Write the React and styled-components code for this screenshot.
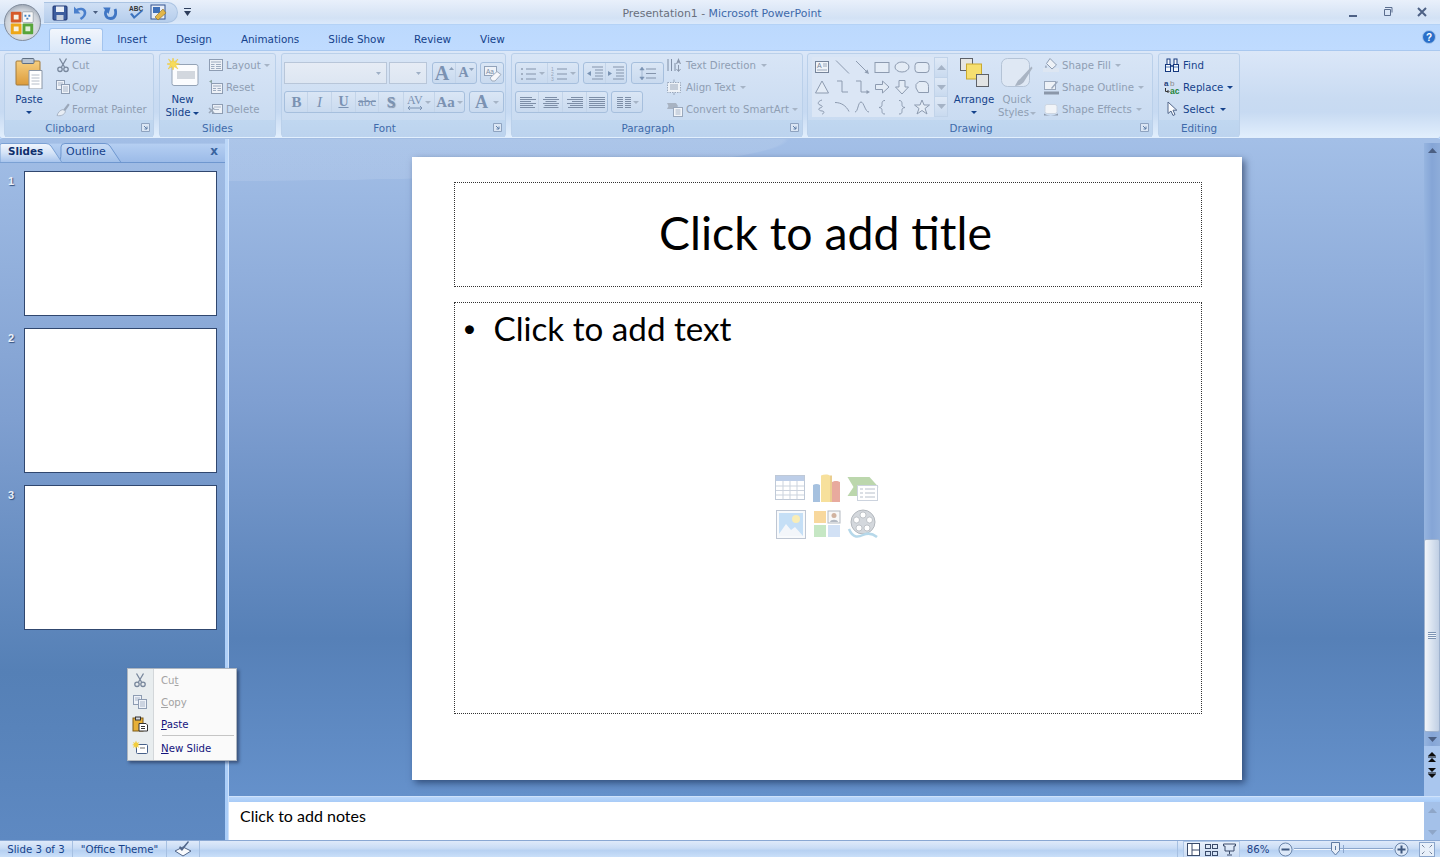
import React from "react";
import styled, { createGlobalStyle } from "styled-components";

const GlobalStyle = createGlobalStyle`
  html, body { margin: 0; padding: 0; height: 100%; overflow: hidden; }
  body { font-family: "DejaVu Sans", "Liberation Sans", sans-serif; font-size: 10px; color: #15428b; }
  * { box-sizing: border-box; }
`;

const Window = styled.div`
  position: relative;
  width: 1440px;
  height: 857px;
  display: flex;
  flex-direction: column;
  overflow: hidden;
  background: #bfdbff;
`;

/* title bar */
const TitleBar = styled.div`
  height: 25px;
  flex: none;
  display: flex;
  align-items: center;
  position: relative;
  padding-left: 44px;
  background: linear-gradient(#e9f0fb, #dde8f7 40%, #d3e2f5 75%, #dbe9fb);
  border-bottom: 1px solid #b4d2f6;
`;
const Orb = styled.svg`
  position: absolute;
  left: 4px;
  top: 4px;
  z-index: 5;
`;
const Qat = styled.div`
  height: 21px;
  width: 134px;
  margin-top: 1px;
  display: flex;
  align-items: center;
  padding-left: 8px;
  gap: 5px;
  border-radius: 0 11px 11px 0;
  border: 1px solid #aac3e2;
  border-left: none;
  background: linear-gradient(#cfdff4, #c2d6f0 50%, #b6ceec);
`;
const QatCaret = styled.svg`
  margin-left: 6px;
`;
const DocTitle = styled.div`
  position: absolute;
  left: 0;
  right: 0;
  top: 7px;
  padding-left: 4px;
  text-align: center;
  font-size: 10.9px;
  color: #3e6aaa;
  span { color: #686f7c; }
`;
const WinButtons = styled.div`
  margin-left: auto;
  display: flex;
  align-items: center;
  padding-right: 12px;
  gap: 24px;
`;

/* tabs */
const TabRow = styled.div`
  height: 25px;
  flex: none;
  display: flex;
  align-items: flex-end;
  padding-left: 49px;
  background: linear-gradient(#bcd9fd, #bfdbff);
  position: relative;
`;
const Tab = styled.div`
  height: 24px;
  padding: 7px 14.5px 0;
  font-size: 10.4px;
  color: #15428b;
  white-space: nowrap;
  ${(p) => p.$active && `
    height: 23px;
    padding: 5px 10.5px 0;
    border: 1px solid #a3c4ee;
    border-bottom: none;
    border-radius: 3px 3px 0 0;
    background: linear-gradient(#f2f6fc, #dbe8f9);
    position: relative;
    top: 1px;
  `}
`;
const HelpIcon = styled.svg`
  position: absolute;
  right: 4px;
  top: 5px;
`;

/* ribbon */
const Ribbon = styled.div`
  height: 89px;
  flex: none;
  display: flex;
  gap: 5px;
  padding: 2px 2px 2px 4px;
  border-top: 1px solid #a9c8ef;
  border-bottom: 1px solid #a3bde3;
  border-radius: 0 0 3px 3px;
  background: linear-gradient(#dbe7f8, #c9dbf2 55%, #c7daf2 70%, #e2effd);
`;
const Group = styled.div`
  width: ${(p) => p.$w}px;
  margin-left: ${(p) => p.$ml || 0}px;
  flex: none;
  height: 84px;
  display: flex;
  flex-direction: column;
  border: 1px solid #bad0ea;
  border-radius: 3px;
  background: linear-gradient(#d8e5f6, #c6d9f0);
`;
const GroupBody = styled.div`
  height: 66px;
  flex: none;
  display: flex;
`;
const GroupLabel = styled.div`
  flex: 1;
  position: relative;
  text-align: center;
  padding-right: ${(p) => (p.$launcher ? 18 : 0)}px;
  font-size: 10.4px;
  line-height: 17px;
  color: #3e6aaa;
  background: linear-gradient(#c0d7f0, #bcd3ee);
`;
const Launcher = styled.svg`
  position: absolute;
  right: 3px;
  top: 3px;
`;
const LargeBtn = styled.div`
  width: ${(p) => p.$w}px;
  margin-left: ${(p) => p.$ml || 0}px;
  flex: none;
  display: flex;
  flex-direction: column;
  align-items: center;
  padding-top: 3px;
  font-size: 10.2px;
  line-height: 13px;
  text-align: center;
  white-space: nowrap;
  color: ${(p) => (p.$off ? "#8f9eb3" : "#15428b")};
  svg { margin-bottom: 4px; flex: none; }
`;
const SmallCol = styled.div`
  display: flex;
  flex-direction: column;
  margin-left: ${(p) => p.$ml || 0}px;
`;
const SmallBtn = styled.div`
  height: 22px;
  display: flex;
  align-items: center;
  gap: ${(p) => p.$gap ?? 2}px;
  white-space: nowrap;
  font-size: 10.2px;
  color: ${(p) => (p.$off ? "#8f9eb3" : "#15428b")};
  svg { flex: none; }
`;
const Caret = styled.i`
  display: inline-block;
  width: 0;
  height: 0;
  margin-left: ${(p) => p.$ml ?? 1}px;
  margin-top: ${(p) => p.$mt || 0}px;
  margin-bottom: ${(p) => p.$mb || 0}px;
  vertical-align: middle;
  border-left: 3px solid transparent;
  border-right: 3px solid transparent;
  border-top: 3px solid ${(p) => (p.$off ? "#a6b4c6" : "#15428b")};
`;
const ToolCol = styled.div`
  display: flex;
  flex-direction: column;
  gap: 7px;
  padding: 8px 0 0 ${(p) => p.$pl || 2}px;
`;
const ToolRow = styled.div`
  display: flex;
  gap: ${(p) => p.$gap ?? 4}px;
  height: 22px;
`;
const Combo = styled.div`
  width: ${(p) => p.$w}px;
  height: 22px;
  margin-left: ${(p) => p.$ml || 0}px;
  display: flex;
  align-items: center;
  justify-content: flex-end;
  padding-right: 5px;
  border: 1px solid #b8c6d9;
  background: linear-gradient(#e6ecf5, #dde6f2);
`;
const ToolBox = styled.div`
  display: flex;
  height: 22px;
  margin-left: ${(p) => p.$ml || 0}px;
  border: 1px solid #a6bfdd;
  border-radius: 3px;
  background: linear-gradient(#dae6f5, #c9daef);
`;
const ToolCell = styled.div`
  width: ${(p) => p.$w}px;
  display: flex;
  align-items: center;
  justify-content: center;
  border-left: 1px solid ${(p) => (p.$first ? "transparent" : "#c3d4e9")};
  color: #7b92b2;
  font-family: "Liberation Serif", serif;
  font-size: ${(p) => p.$fs || 14}px;
  font-weight: ${(p) => (p.$bold ? 700 : 400)};
  font-style: ${(p) => (p.$it ? "italic" : "normal")};
  text-decoration: ${(p) => p.$deco || "none"};
  text-shadow: ${(p) => (p.$shadow ? "1px 1px 1px #7f8fa5" : "none")};
`;
const Gallery = styled.div`
  display: flex;
  margin: 3px 0 0 4px;
  height: 60px;
`;
const ShapeGrid = styled.div`
  width: 123px;
  display: grid;
  grid-template-columns: repeat(6, 20px);
  grid-auto-rows: 20px;
  border: 1px solid #c1d3e9;
  border-width: 0 1px 0 0;
  background: #dbe6f5;
  align-items: center;
  justify-items: center;
`;
const GalleryBtns = styled.div`
  width: 13px;
  display: flex;
  flex-direction: column;
`;
const GalleryBtn = styled.div`
  flex: 1;
  display: flex;
  align-items: center;
  justify-content: center;
  border: 1px solid #c1d3e9;
  border-left: none;
  margin-top: ${(p) => (p.$first ? 0 : -1)}px;
  background: linear-gradient(#dfe9f6, #c9daef);
`;

/* workspace */
const Workspace = styled.div`
  flex: 1;
  min-height: 0;
  display: flex;
  position: relative;
`;
const SidePane = styled.div`
  width: 225px;
  flex: none;
  padding-top: 4px;
  display: flex;
  flex-direction: column;
  background: linear-gradient(#a2bee6 0, #7f9fd0 40%, #5580b6 76%, #5e89c2 100%);
`;
const PaneTabs = styled.div`
  height: 20px;
  flex: none;
  display: flex;
  position: relative;
  border-top: 1px solid #a9c4ea;
  border-bottom: 1px solid #6f97cf;
  background: linear-gradient(#b5cff2, #9cbbe8);
`;
const PaneTab = styled.div`
  position: relative;
  width: ${(p) => p.$w}px;
  margin-left: ${(p) => p.$ml || 0}px;
  padding: 1px 0 0 ${(p) => p.$pl}px;
  font-size: ${(p) => (p.$active ? 10.4 : 11)}px;
  font-weight: ${(p) => (p.$active ? 700 : 400)};
  color: ${(p) => (p.$active ? "#0f2f6d" : "#15428b")};
  z-index: ${(p) => (p.$active ? 2 : 1)};
  span { position: relative; }
`;
const TabShape = styled.svg`
  position: absolute;
  left: 0;
  top: -1px;
`;
const PaneClose = styled.div`
  position: absolute;
  right: 7px;
  top: 0;
  font-size: 12px;
  font-weight: 700;
  color: #3a649f;
`;
const ThumbList = styled.div`
  display: flex;
  flex-direction: column;
  gap: 12px;
  padding: 8px 0 0 7px;
`;
const ThumbRow = styled.div`
  display: flex;
  gap: 9px;
`;
const ThumbNo = styled.div`
  width: 8px;
  padding: 4px 0 0 1px;
  font-size: 11px;
  font-weight: 700;
  color: #e9eff8;
  text-shadow: 1px 1px 1px #33507f;
  font-family: "Liberation Sans", sans-serif;
`;
const Thumb = styled.div`
  width: 193px;
  height: 145px;
  background: #fff;
  border: 1px solid #30476f;
`;
const Splitter = styled.div`
  width: 4px;
  flex: none;
  background: linear-gradient(#bcd7f8, #aacdf8);
  border-right: 1px solid #cfe2fb;
`;
const MainCol = styled.div`
  flex: 1;
  min-width: 0;
  display: flex;
  flex-direction: column;
`;
const EditRow = styled.div`
  flex: 1;
  min-height: 0;
  display: flex;
`;
const Stage = styled.div`
  flex: 1;
  display: flex;
  justify-content: center;
  padding-top: 18px;
  background:
    radial-gradient(ellipse 560px 42px at 0 0, rgba(255, 255, 255, 0.1) 99%, transparent 100%),
    linear-gradient(#a3bfe7 0, #7f9fd1 40%, #5680b7 76%, #6591cb 100%);
`;
const Slide = styled.div`
  width: 830px;
  height: 623px;
  padding: 25px 40px 0 42px;
  background: #fff;
  box-shadow: 3px 3px 7px rgba(10, 25, 60, 0.55);
  display: flex;
  flex-direction: column;
  gap: 15px;
  font-family: Lato, "Liberation Sans", sans-serif;
  color: #000;
`;
const Placeholder = styled.div`
  height: ${(p) => p.$h}px;
  border: 1px dotted #333;
  flex: none;
`;
const TitleBox = styled(Placeholder)`
  display: flex;
  align-items: center;
  justify-content: center;
  font-size: 46.4px;
  padding: 0 4px 6px 0;
`;
const BodyBox = styled(Placeholder)`
  padding: 4px 0 0 9px;
  font-size: 33.2px;
  line-height: 42px;
  display: flex;
  flex-direction: column;
`;
const Bullet = styled.div`
  display: flex;
  span:first-child { width: 30px; font-size: 24px; margin-left: -1px; padding-right: 1px; }
  span:last-child { margin-left: 1px; }
`;
const ContentIcons = styled.div`
  align-self: center;
  margin: 121px 0 0 -11px;
  display: grid;
  grid-template-columns: repeat(3, 36px);
  grid-auto-rows: 36px;
  justify-items: center;
  align-items: center;
  opacity: 0.5;
`;
const VScroll = styled.div`
  width: 16px;
  flex: none;
  display: flex;
  flex-direction: column;
  align-items: stretch;
  border-top: 4px solid #a3bfe7;
  background: linear-gradient(90deg, #96b5e0, #85a5d6 50%, #8eadda);
`;
const ScrollArrow = styled.div`
  height: 14px;
  flex: none;
  display: flex;
  align-items: center;
  justify-content: center;
`;
const Track = styled.div`
  flex: 1;
  display: flex;
  flex-direction: column;
  justify-content: flex-end;
`;
const Thumbbar = styled.div`
  height: 193px;
  display: flex;
  align-items: center;
  justify-content: center;
  border: 1px solid #9fb3cf;
  border-radius: 2px;
  background: linear-gradient(90deg, #f2f5fa, #d8e2ef 50%, #c0cfe4);
`;
const Grip = styled.div`
  width: 8px;
  height: 7px;
  background: repeating-linear-gradient(#7c93b3 0 1px, #eef3f9 1px 2px);
`;
const NavBtns = styled.div`
  height: 50px;
  flex: none;
  padding-top: 6px;
  display: flex;
  flex-direction: column;
  align-items: center;
  gap: 6px;
  background: #a9c6ee;
`;
const HSplit = styled.div`
  height: 6px;
  flex: none;
  background: linear-gradient(#b8d6fb, #a8cbf7);
  border-top: 1px solid #cfe2fb;
`;
const NotesRow = styled.div`
  height: 38px;
  flex: none;
  display: flex;
`;
const Notes = styled.div`
  flex: 1;
  padding: 3px 0 0 11px;
  background: #fff;
  color: #000;
  font-family: Lato, "Liberation Sans", sans-serif;
  font-size: 16px;
  line-height: 22px;
`;
const NotesScroll = styled.div`
  width: 16px;
  flex: none;
  display: flex;
  flex-direction: column;
  justify-content: space-between;
  align-items: center;
  padding: 6px 0 5px;
  background: #a4c1e9;
`;

/* context menu */
const Menu = styled.div`
  position: absolute;
  left: 127px;
  top: 529px;
  width: 110px;
  height: 93px;
  padding: 0 1px;
  background: linear-gradient(90deg, #e8edef 0 25px, #d3d7da 25px 26px, #fafafa 26px);
  border: 1px solid #aeb6c0;
  box-shadow: 2px 2px 3px rgba(30, 40, 70, 0.6);
  display: flex;
  flex-direction: column;
  z-index: 6;
`;
const MenuItem = styled.div`
  height: 22px;
  flex: none;
  display: flex;
  align-items: center;
  font-size: 10.2px;
  color: ${(p) => (p.$off ? "#a3a3a3" : "#14147d")};
  svg { margin: 0 13px 0 3px; flex: none; }
`;
const MenuSep = styled.div`
  height: 1px;
  flex: none;
  margin: 0 1px 1px 33px;
  background: #c5c5c5;
`;

/* status bar */
const StatusBar = styled.div`
  height: 17px;
  flex: none;
  display: flex;
  align-items: center;
  border-top: 1px solid #8aa8d3;
  background: linear-gradient(#dfeafa, #c9dcf5 45%, #b7d1f2 60%, #c9dff9);
  font-size: 10.2px;
  color: #15428b;
`;
const StatusCell = styled.div`
  height: 100%;
  width: ${(p) => p.$w}px;
  flex: none;
  display: flex;
  align-items: center;
  justify-content: center;
  border-right: 1px solid #a6c0e2;
`;
const StatusRight = styled.div`
  margin-left: auto;
  height: 100%;
  display: flex;
  align-items: center;
  border-left: 1px solid #a6c0e2;
  padding-left: 5px;
`;
const ViewBox = styled.div`
  display: flex;
  align-items: center;
  width: 57px;
  height: 100%;
  justify-content: space-around;
  border: 1px solid #b0c8e8;
  border-bottom: none;
  background: linear-gradient(#e8f0fb, #cbdcf3);
`;
const Zoom = styled.div`
  width: 36px;
  text-align: center;
  font-size: 10.2px;
  color: #1d3f86;
  margin-right: 2px;
`;
const ZoomTrack = styled.div`
  position: relative;
  width: 99px;
  height: 2px;
  margin: 0 1px;
  background: linear-gradient(#8ba6cc 50%, #f1f6fd 50%);
`;
const ZoomThumb = styled.svg`
  position: absolute;
  left: 37px;
  top: -6px;
`;
const Tick = styled.div`
  position: absolute;
  left: 49px;
  top: -3px;
  width: 1px;
  height: 8px;
  background: #8ba6cc;
`;

/* icons */
const S = ({ w = 16, h = 16, vb, children, ...rest }) => (
  <svg width={w} height={h} viewBox={vb || `0 0 ${w} ${h}`} {...rest}>{children}</svg>
);

const Scissors = () => (
  <S>
    <g fill="none" stroke="#78879c" strokeWidth="1.3">
      <path d="M4.500 1.500 9.500 10M11.500 1.500 6.500 10" />
      <circle cx="5" cy="12.300" r="2.200" />
      <circle cx="11" cy="12.300" r="2.200" />
    </g>
  </S>
);
const CopyIcon = () => (
  <S>
    <g fill="#eef2f8" stroke="#8d9cb2">
      <rect x="1.500" y="1.500" width="8" height="9" />
      <rect x="6.500" y="5.500" width="8" height="9" />
    </g>
    <path d="M3 4h5M3 6h3M8 8h5M8 10h5M8 12h5" stroke="#a8b5c8" />
  </S>
);
const PainterIcon = () => (
  <S>
    <path d="M8 9 13 2.500l1.700 1.200L10.300 10z" fill="#9aa7b9" />
    <path d="M2 14.500c1-3 3-5.500 6-6l2.500 2c-1 2.800-4 5-8.500 4z" fill="#e8edf4" stroke="#a9b5c6" />
  </S>
);
const LayoutIcon = () => (
  <S>
    <rect x="1.500" y="2.500" width="13" height="11" fill="#edf1f7" stroke="#8e9db3" />
    <path d="M3 5h10M3 7.500h3.500M3 9.500h3.500M3 11.500h3.500M8 7.500h5M8 9.500h5M8 11.500h5" stroke="#9dabbf" />
  </S>
);
const ResetIcon = () => (
  <S>
    <rect x="3.500" y="4.500" width="11" height="10" fill="#edf1f7" stroke="#8e9db3" />
    <path d="M5 7h8M5 9.500h3M5 11.500h3M9.500 9.500h3.500M9.500 11.500h3.500" stroke="#9dabbf" />
    <path d="M1 2.500 4 .8v3.400z" fill="#8aa2a0" />
  </S>
);
const DeleteIcon = () => (
  <S>
    <rect x="4.500" y="3.500" width="10" height="9" fill="#edf1f7" stroke="#8e9db3" />
    <path d="M6 6h7M6 8.500h5" stroke="#a8b5c8" />
    <path d="M1 7l5 5M6 7l-5 5" stroke="#9ba8ba" strokeWidth="1.600" />
  </S>
);
const TextDirIcon = () => (
  <S>
    <path d="M2 2v12M5.500 2v12M9 6v8" stroke="#7f8ea5" fill="none" />
    <path d="M12.500 1 10 7h1.200l.5-1.300h1.600l.5 1.300H15z" fill="#8b98ac" />
    <path d="M12.500 8v6M10.500 12l2 2.500 2-2.500" stroke="#8b98ac" fill="none" />
  </S>
);
const AlignTextIcon = () => (
  <S>
    <rect x="1.500" y="3.500" width="13" height="10" fill="#eef2f7" stroke="#9aa8bc" strokeDasharray="1.500 1" />
    <path d="M4 6h8M4 8h8M4 10h8M8 .5v2.500M8 14v2" stroke="#9aa8bc" />
  </S>
);
const SmartArtIcon = () => (
  <S w={18}>
    <path d="M1 2h9l2 3-2 3H1l1.500-3z" fill="#a8b3c2" />
    <rect x="7.500" y="6.500" width="9" height="9" fill="#f2f5f9" stroke="#9aa8bc" />
    <path d="M9.500 9h5M9.500 11h5M9.500 13h5" stroke="#a8b5c8" />
  </S>
);
const FillIcon = () => (
  <S>
    <rect x="0" y="11" width="16" height="4" fill="#dde6f2" />
    <path d="M7 1.500 13.500 8 9 12 3.500 6.500z" fill="#eef2f7" stroke="#8d9cb2" />
    <path d="M3 8c-1.500 1.500-1.500 3 0 3 1.300 0 1-1.700 0-3z" fill="#a2afc1" />
  </S>
);
const OutlineIcon = () => (
  <S>
    <rect x="1" y="12.500" width="15" height="3" fill="#8b97a9" />
    <rect x="1.500" y="2.500" width="11" height="8" fill="#eef2f7" stroke="#9aa8bc" />
    <path d="M8 9l6-7 1 1-6 7z" fill="#9aa8bc" />
  </S>
);
const EffectsIcon = () => (
  <S>
    <rect x="2" y="3.500" width="12" height="9" rx="2" fill="#f1f4f8" stroke="#cdd6e2" />
    <path d="M1 12.500c3 2.500 10 2.500 14 0v2H1z" fill="#8d99ab" />
  </S>
);
const Binoculars = () => (
  <S>
    <g fill="#f6f8fb" stroke="#15397e" strokeWidth="1">
      <rect x="1.500" y="7.500" width="5" height="7" />
      <rect x="9.500" y="7.500" width="5" height="7" />
      <rect x="3" y="2" width="3" height="5.500" />
      <rect x="10" y="2" width="3" height="5.500" />
    </g>
    <path d="M6.500 9h3" stroke="#15397e" strokeWidth="1.500" />
    <path d="M2 10h4M10 10h4" stroke="#4a78b9" />
  </S>
);
const ReplaceIcon = () => (
  <S w={18} h={16} style={{ fontFamily: "Liberation Sans, sans-serif" }}>
    <path d="M1.500 9v3.500h3M3.500 11l1.500 1.500L3.500 14" fill="none" stroke="#333" />
    <text x="0" y="7" fontSize="8" fontWeight="700" fill="#1f3f7d">a</text>
    <text x="6" y="7" fontSize="8" fill="#8c8c8c">b</text>
    <text x="6" y="15" fontSize="8.500" fontWeight="700" fill="#23853a">ac</text>
  </S>
);
const CursorIcon = () => (
  <S>
    <path d="M4 1v11.500l3-2.500 2 4.500 2-1-2-4.300h3.800z" fill="#fbfcfe" stroke="#53678a" />
  </S>
);
const FrameArrow = () => (
  <Launcher width="9" height="9">
    <path d="M.5.5h8v8h-8z" fill="#dbe6f4" stroke="#8ea3c0" />
    <path d="M3 3l3 3M6 3.500V6H3.500" stroke="#5f7fa8" fill="none" />
  </Launcher>
);

const PasteLg = () => (
  <S w={28} h={32}>
    <defs>
      <linearGradient id="pb" x1="0" x2="0" y1="0" y2="1">
        <stop offset="0" stopColor="#f6cf80" />
        <stop offset="1" stopColor="#dc9b3a" />
      </linearGradient>
    </defs>
    <rect x="1" y="4" width="24" height="24" rx="1" fill="url(#pb)" stroke="#a17a3d" />
    <rect x="7" y="1.500" width="12" height="5" rx="1" fill="#b8c3d0" stroke="#5f6f83" />
    <path d="M14 13.500h13V32H14z" fill="#fff" stroke="#8a96a6" />
    <path d="M16.500 18h8M16.500 21h8M16.500 24h8M16.500 27h8" stroke="#b6bec9" />
  </S>
);
const NewSlideLg = () => (
  <S w={32} h={32}>
    <rect x="5" y="7.500" width="26" height="21" rx="2" fill="#fbfcfe" stroke="#94a3b6" />
    <rect x="10" y="14" width="18" height="8" fill="#d2d7de" />
    <path d="M6 1 7.200 5 11 2 8.500 6 12.500 7 8.500 8.200 11 12 7.200 9.500 6 13 5 9.500 1.200 12 3.500 8 0 7 3.800 6 1.500 2 5 5z" fill="#f7dc5a" stroke="#ecc531" strokeWidth=".5" />
  </S>
);
const ArrangeLg = () => (
  <S w={30} h={32}>
    <rect x="1.500" y="1.500" width="12" height="12" fill="#e6e6e3" stroke="#5d6168" />
    <rect x="7.500" y="7" width="15" height="15" fill="#f6df6f" stroke="#c9a930" />
    <rect x="17.500" y="17.500" width="12" height="12" fill="#e2e4e4" stroke="#5d6168" />
  </S>
);
const QuickStylesLg = () => (
  <S w={34} h={32}>
    <rect x="1.500" y="1.500" width="28" height="28" rx="6" fill="#dfe8f4" stroke="#b4c3d6" />
    <path d="M31.500 9.500 20 22c-2 1-3 3-5 7 5-.5 8-2 10-6l7.500-12z" fill="#a9b4c3" />
  </S>
);

const SaveIcon = () => (
  <S>
    <rect x="1" y="1" width="14" height="14" rx="1" fill="#3c5d9e" stroke="#1e3570" />
    <rect x="4" y="1.500" width="8" height="5.500" fill="#e9eef6" />
    <rect x="4.500" y="10" width="7" height="5" fill="#c7d0de" />
  </S>
);
const UndoIcon = () => (
  <S w={15}>
    <path d="M3 5.500c3.500-2.500 8.500-2 9 2 .3 3-2 5-4.500 6.500" fill="none" stroke="#4a7fcc" strokeWidth="2.600" />
    <path d="M1 1.500v7h6.500z" fill="#4a7fcc" />
  </S>
);
const RedoIcon = () => (
  <S w={14}>
    <path d="M3.500 5c-2 3-1.200 8.500 4 8.500s6-5.500 4.500-9.500" fill="none" stroke="#4076c4" strokeWidth="2.800" />
    <path d="M0 2.500h7.500L5.500 9z" fill="#4076c4" />
  </S>
);
const SpellIcon = () => (
  <S w={17} style={{ fontFamily: "Liberation Sans, sans-serif" }}>
    <text x="1" y="6" fontSize="6.500" fontWeight="700" fill="#333">ABC</text>
    <path d="M2 9 6 14 15 6l-1.500-1L6.500 11 4 8z" fill="#3c74bf" />
  </S>
);
const PreviewIcon = () => (
  <S w={17} h={17}>
    <rect x="1" y="1" width="14" height="14" fill="#e7edf7" stroke="#33538f" />
    <rect x="3" y="3" width="7" height="6" fill="#3f70b8" />
    <path d="M5 13 13 5l3 4-8 7z" fill="#e2b64a" stroke="#876a22" strokeWidth=".6" />
  </S>
);

const TinyCaret = ({ fill = "#4a5e80" }) => (
  <svg width="5" height="3"><path d="M0 0h5L2.500 3z" fill={fill} /></svg>
);
const UpArrow = ({ fill = "#4b5f82" }) => (
  <svg width="9" height="5"><path d="M0 5h9L4.500 0z" fill={fill} /></svg>
);
const DownArrow = ({ fill = "#4b5f82" }) => (
  <svg width="9" height="5"><path d="M0 0h9L4.500 5z" fill={fill} /></svg>
);
const DoubleArrow = ({ up }) => (
  <svg width="8" height="10" style={up ? undefined : { transform: "scaleY(-1)" }}>
    <path d="M0 4h8L4 0zM0 10h8L4 6z" fill="#0c0c0c" />
    <path d="M0 5h8" stroke="#0c0c0c" />
  </svg>
);

const BulletIcon = ({ num }) => (
  <S w={17} h={15}>
    {num ? (
      <g style={{ fontFamily: "Liberation Sans, sans-serif" }} fontSize="5" fill="#95a4b9">
        <text x="0" y="5">1</text><text x="0" y="10">2</text><text x="0" y="15">3</text>
      </g>
    ) : (
      <g fill="#a2b0c3"><rect x="1" y="2" width="2" height="2" /><rect x="1" y="7" width="2" height="2" /><rect x="1" y="12" width="2" height="2" /></g>
    )}
    <path d="M6 3h10M6 8h10M6 13h10" stroke="#8494ab" />
  </S>
);
const IndentIcon = ({ inc }) => (
  <S w={16} h={14}>
    <path d="M5 1h11M8 4h8M8 7h8M8 10h8M5 13h11" stroke="#8494ab" />
    <path d={inc ? "M0 5 4 7.500 0 10z" : "M4 5 0 7.500 4 10z"} fill="#7a93b3" />
  </S>
);
const SpacingIcon = () => (
  <S w={18} h={15}>
    <path d="M3 1 .8 4h4.400zM3 14 .8 11h4.400zM3 4v7" fill="#7a93b3" stroke="#7a93b3" strokeWidth=".5" />
    <path d="M7 3h10M7 7.500h10M7 12h10" stroke="#8494ab" />
  </S>
);
const AlignIcon = ({ kind }) => {
  const rows = [1, 3, 5, 7, 9, 11];
  const short = [12, 16, 11, 16, 13, 15];
  return (
    <S w={16} h={12}>
      <g stroke="#7d8ea7">
        {rows.map((y, i) => {
          const w = kind === "j" ? 16 : short[i];
          const x = kind === "l" || kind === "j" ? 0 : kind === "c" ? (16 - w) / 2 : 16 - w;
          return <path key={y} d={`M${x} ${y + 0.5}h${w}`} />;
        })}
      </g>
    </S>
  );
};
const ColumnsIcon = () => (
  <S w={14} h={12}>
    <g stroke="#7d8ea7">
      {[1, 3, 5, 7, 9, 11].map((y) => <path key={y} d={`M0 ${y + 0.5}h6M8 ${y + 0.5}h6`} />)}
    </g>
  </S>
);
const EraserIcon = () => (
  <S w={19} h={17}>
    <rect x="1.500" y="1.500" width="12" height="9" fill="#eef2f8" stroke="#92a3ba" />
    <text x="3" y="9" fontSize="6.500" fill="#7b8ba3" style={{ fontFamily: "Liberation Sans, sans-serif" }}>Aa</text>
    <path d="M7 13 14 6.500l4 3-6 6.500H9z" fill="#f6f7fa" stroke="#a0adbe" />
  </S>
);
const KerningIcon = () => (
  <S w={16} h={17} style={{ fontFamily: "Liberation Serif, serif" }}>
    <text x="0" y="10" fontSize="12" fill="#7b92b2">AV</text>
    <path d="M1 14h14M3 12l-2 2 2 2M13 12l2 2-2 2" fill="none" stroke="#7b92b2" />
  </S>
);
const GrowIcon = ({ big }) => (
  <>
    <span style={{ fontSize: big ? 20 : 14, fontWeight: 700, lineHeight: 1 }}>A</span>
    <svg width="5" height="3" style={{ marginBottom: big ? 10 : 8 }}><path d={big ? "M0 3h5L2.500 0z" : "M0 0h5L2.500 3z"} fill="#8ea2bc" /></svg>
  </>
);

/* drawing gallery shapes */
const shapeProps = { fill: "none", stroke: "#8d9bb0", strokeWidth: 1 };
const boxProps = { fill: "#e4ecf6", stroke: "#8d9bb0", strokeWidth: 1 };
const shapes = [
  <><rect x="1.500" y="2.500" width="13" height="11" fill="#f0f4f9" stroke="#75849a" /><text x="3" y="9" fontSize="7" fill="#75849a" style={{ fontFamily: "Liberation Sans, sans-serif" }}>A</text><path d="M9 5h4M9 7h4M3 11h10" stroke="#9aa8bc" /></>,
  <path d="M2 1.500l13 13" {...shapeProps} />,
  <><path d="M2 2l10 10" {...shapeProps} /><path d="M15 15l-4.500-1.500 3-3z" fill="#8d9bb0" /></>,
  <rect x="1" y="3.500" width="14" height="10" {...boxProps} />,
  <ellipse cx="8" cy="8" rx="7" ry="5" {...boxProps} />,
  <rect x="1" y="3.500" width="14" height="10" rx="3" {...boxProps} />,
  <path d="M8 2 14.500 14h-13z" {...boxProps} />,
  <path d="M3 2h5v11h6" {...shapeProps} />,
  <><path d="M2 2h5v11h6" {...shapeProps} /><path d="M16 13l-3.500-2v4z" fill="#8d9bb0" /></>,
  <path d="M1.500 5.500h7V2l6.500 6-6.500 6V10.500h-7z" {...boxProps} />,
  <path d="M5 1.500h6V8h3.500L8 15 1.500 8H5z" {...boxProps} />,
  <path d="M5 2.500h5c3 0 4.500 2 4.500 5v6h-10L2 9V5.500z" {...boxProps} />,
  <path d="M8 1c-4 1-5 4-2 5 3 1 3 2 0 3-3 1 0 3 2 3 3 0 2 3 0 3" {...shapeProps} />,
  <path d="M1 3.500c6 0 11 3 14 9" {...shapeProps} />,
  <path d="M1 13c3 0 3-10 6-10s4 10 8 10" {...shapeProps} />,
  <path d="M11 1.500c-3 0-3 2-3 4s-.5 2.500-3 3c2.500.5 3 1 3 3s0 3.500 3 3.500" {...shapeProps} />,
  <path d="M5 1.500c3 0 3 2 3 4s.5 2.500 3 3c-2.500.5-3 1-3 3s0 3.500-3 3.500" {...shapeProps} />,
  <path d="M8 1l2 5h5.500L11 9.500 13 15 8 11.500 3 15l2-5.500L.5 6H6z" {...boxProps} />,
];

/* content placeholder icons */
const TableIcon = () => (
  <S w={32} h={26}>
    <rect x=".5" y=".5" width="29" height="24" fill="#fff" stroke="#8094b0" />
    <rect x="1" y="1" width="28" height="5" fill="#7d9fd3" />
    <path d="M1 11h28M1 15.500h28M1 20h28M8 6v18.500M15 6v18.500M22 6v18.500" stroke="#9aa9bf" />
  </S>
);
const ChartIcon = () => (
  <S w={32} h={30}>
    <path d="M2 12c2-1.500 5-1.500 7 0v17H2z" fill="#4f85c0" />
    <path d="M10 2.500c3-1.500 7-1.500 9 0V29h-9z" fill="#f0c23c" />
    <path d="M19 2.500h2V29h-2z" fill="#d79f22" />
    <path d="M21 9c2-1.500 6-1.500 8 0v20h-8z" fill="#d2573f" />
  </S>
);
const SmartIcon = () => (
  <S w={32} h={26}>
    <path d="M.5 2h22l9 10-9 9H.5l6-9z" fill="#7bb05e" />
    <rect x="10.500" y="10.500" width="20" height="15" fill="#fff" stroke="#9aa9bf" />
    <path d="M13 14h3M18 14h10M13 18h3M18 18h10M13 22h3M18 22h10" stroke="#75849a" />
  </S>
);
const PictureIcon = () => (
  <S w={30} h={29}>
    <rect x=".5" y=".5" width="29" height="28" fill="#f2f6fb" stroke="#7f8fa8" />
    <rect x="3" y="3" width="24" height="23" fill="#8cc0ee" />
    <circle cx="20" cy="9" r="4" fill="#f4dc6f" />
    <path d="M3 24 10 14l5 6 4-3 8 9H3z" fill="#e8eff7" />
  </S>
);
const ClipIcon = () => (
  <S w={28} h={28}>
    <rect x="1" y="1" width="12" height="12" fill="#f3b33e" />
    <rect x="15" y="1" width="12" height="12" fill="#f3f3f3" stroke="#6b7785" />
    <circle cx="21" cy="5.500" r="2.500" fill="#a46a44" />
    <path d="M17 12c0-3 8-3 8 0z" fill="#6a7688" />
    <rect x="1" y="15" width="12" height="12" fill="#8fd18a" />
    <rect x="15" y="15" width="12" height="12" fill="#a7c4ec" />
  </S>
);
const MediaIcon = () => (
  <S w={32} h={30}>
    <circle cx="16" cy="13" r="12" fill="#aab3bd" stroke="#69727d" />
    <g fill="#fff" stroke="#5f6973" strokeWidth=".7">
      <circle cx="16" cy="6" r="3" /><circle cx="9.500" cy="11" r="3" /><circle cx="22.500" cy="11" r="3" />
      <circle cx="12" cy="19" r="3" /><circle cx="20" cy="19" r="3" />
    </g>
    <path d="M2 20c4 10 10 8 14 6s9-2 14 2" fill="none" stroke="#6fb3d6" strokeWidth="2.500" />
  </S>
);

/* small menu icons */
const PasteSm = () => (
  <S>
    <rect x="1" y="2" width="10" height="13" fill="#e7b038" stroke="#7d5c1a" />
    <rect x="3.500" y="1" width="5" height="3" fill="#d2d7de" stroke="#333" />
    <path d="M7 7.500h7l1.500 1.500v6H7z" fill="#fff" stroke="#333" />
    <path d="M9 10.500h4M9 12.500h4" stroke="#333" />
  </S>
);
const NewSlideSm = () => (
  <S>
    <rect x="4.500" y="4.500" width="11" height="9" rx="1" fill="#fff" stroke="#47618a" />
    <path d="M8 8h5" stroke="#6e6e6e" />
    <path d="M4 .5 5 3 7 2 6 4l2 1-2 .5 1 2.500-2-1.500L4 9 3 6.500 1 8l1-2.500L0 5l2-1-1-2 2 1z" fill="#f2cd3b" />
  </S>
);
const CheckBook = () => (
  <S w={18}>
    <path d="M1 10 9 6l8 4-8 5z" fill="#f8fafd" stroke="#51668a" />
    <path d="M5 7 8 10 15 1l-1-1-6 7-2-2z" fill="#51668a" />
  </S>
);
const NormalView = () => (
  <S w={13} h={13}>
    <rect x=".5" y=".5" width="12" height="12" fill="#fff" stroke="#3a4b6a" strokeWidth="1" />
    <path d="M5 .5v12M5 7h7.500" stroke="#3a4b6a" />
  </S>
);
const SorterView = () => (
  <S w={13} h={13}>
    <g fill="none" stroke="#3a4b6a"><rect x=".5" y="1.500" width="5" height="4" /><rect x="7.500" y="1.500" width="5" height="4" /><rect x=".5" y="8.500" width="5" height="4" /><rect x="7.500" y="8.500" width="5" height="4" /></g>
  </S>
);
const ShowView = () => (
  <S w={13} h={13}>
    <path d="M.5 1h12v2H11v5H2V3H.5zM6.500 8v3M4 12h5" fill="none" stroke="#3a4b6a" />
  </S>
);
const ZoomBtn = ({ plus }) => (
  <S w={15} h={15}>
    <circle cx="7.500" cy="7.500" r="6.500" fill="#dce8f8" stroke="#6d87ab" />
    <path d={plus ? "M3.500 7.500h8M7.500 3.500v8" : "M3.500 7.500h8"} stroke="#3f587f" strokeWidth="2" />
  </S>
);

export default function App() {
  return (
    <Window>
      <GlobalStyle />
      <Orb width="37" height="37" viewBox="0 0 38 38">
        <defs>
          <radialGradient id="orb" cx="50%" cy="60%" r="65%">
            <stop offset="0" stopColor="#fbfbfc" />
            <stop offset="0.7" stopColor="#ccd2da" />
            <stop offset="1" stopColor="#8f99a8" />
          </radialGradient>
        </defs>
        <circle cx="19" cy="19" r="18.500" fill="url(#orb)" stroke="#7f8b9b" />
        <rect x="7" y="8" width="11" height="11" rx="1" fill="#d65a28" />
        <rect x="7" y="20" width="11" height="11" rx="1" fill="#eea718" />
        <rect x="19" y="20" width="11" height="11" rx="1" fill="#57a53a" />
        <rect x="19" y="8" width="11" height="11" rx="1" fill="#f7f7f7" stroke="#808b98" strokeWidth=".6" />
        <path d="M10 11h5v5h-5zM10 23h5v5h-5z" fill="#f6f1e2" />
        <path d="M22 23h5v5h-5z" fill="#dff0d8" />
        <path d="M21 11h2v2h-2zM25 11h2v2h-2zM23 14h2v2h-2z" fill="#3d7fc2" />
      </Orb>
      <TitleBar>
        <Qat>
          <SaveIcon />
          <UndoIcon />
          <TinyCaret />
          <RedoIcon />
          <span style={{ width: 1 }} />
          <SpellIcon />
          <PreviewIcon />
        </Qat>
        <QatCaret width="7" height="9">
          <path d="M0 0h7v1H0zM0 3h7L3.500 8z" fill="#2d3e5c" />
        </QatCaret>
        <DocTitle><span>Presentation1 -</span> Microsoft PowerPoint</DocTitle>
        <WinButtons>
          <svg width="11" height="11"><rect x="2" y="8" width="8" height="2" fill="#4d6185" /></svg>
          <svg width="11" height="11"><path d="M2.500 2.500h6v6h-6z" fill="none" stroke="#5a6d8e" /><path d="M3 .5h7v5" fill="none" stroke="#5a6d8e" /></svg>
          <svg width="11" height="11"><path d="M1 1l8 8M9 1 1 9" stroke="#4d6185" strokeWidth="2" /></svg>
        </WinButtons>
      </TitleBar>

      <TabRow>
        <Tab $active>Home</Tab>
        <Tab>Insert</Tab>
        <Tab>Design</Tab>
        <Tab>Animations</Tab>
        <Tab>Slide Show</Tab>
        <Tab>Review</Tab>
        <Tab>View</Tab>
        <HelpIcon width="14" height="14">
          <circle cx="7" cy="7" r="6.500" fill="#2a6fc9" stroke="#a7c6ec" />
          <text x="7" y="11" textAnchor="middle" fontSize="10" fontWeight="700" fill="#fff" style={{ fontFamily: "Liberation Sans, sans-serif" }}>?</text>
        </HelpIcon>
      </TabRow>

      <Ribbon>
        <Group $w={150}>
          <GroupBody>
            <LargeBtn $w={48}>
              <PasteLg />
              Paste
              <Caret $ml={0} $mt={5} />
            </LargeBtn>
            <SmallCol $ml={2}>
              <SmallBtn $off $gap={1}><Scissors />Cut</SmallBtn>
              <SmallBtn $off $gap={1}><CopyIcon />Copy</SmallBtn>
              <SmallBtn $off $gap={1}><PainterIcon />Format Painter</SmallBtn>
            </SmallCol>
          </GroupBody>
          <GroupLabel $launcher>Clipboard<FrameArrow /></GroupLabel>
        </Group>

        <Group $w={117}>
          <GroupBody>
            <LargeBtn $w={45}>
              <NewSlideLg />
              New
              <span>Slide<Caret $ml={3} /></span>
            </LargeBtn>
            <SmallCol $ml={3}>
              <SmallBtn $off><LayoutIcon />Layout<Caret $off /></SmallBtn>
              <SmallBtn $off><ResetIcon />Reset</SmallBtn>
              <SmallBtn $off><DeleteIcon />Delete</SmallBtn>
            </SmallCol>
          </GroupBody>
          <GroupLabel>Slides</GroupLabel>
        </Group>

        <Group $w={225}>
          <GroupBody>
            <ToolCol>
              <ToolRow $gap={0}>
                <Combo $w={103}><TinyCaret fill="#9fb0c6" /></Combo>
                <Combo $w={38} $ml={2}><TinyCaret fill="#9fb0c6" /></Combo>
                <ToolBox $ml={5}>
                  <ToolCell $w={22} $first><GrowIcon big /></ToolCell>
                  <ToolCell $w={21}><GrowIcon /></ToolCell>
                </ToolBox>
                <ToolBox $ml={3}>
                  <ToolCell $w={22} $first><EraserIcon /></ToolCell>
                </ToolBox>
              </ToolRow>
              <ToolRow>
                <ToolBox>
                  <ToolCell $w={22} $first $bold $fs={15}>B</ToolCell>
                  <ToolCell $w={24} $it $fs={15}>I</ToolCell>
                  <ToolCell $w={24} $deco="underline" $bold $fs={14}>U</ToolCell>
                  <ToolCell $w={23} $deco="line-through" $fs={13}>abc</ToolCell>
                  <ToolCell $w={25} $shadow $bold $fs={15}>S</ToolCell>
                  <ToolCell $w={31}><KerningIcon /><Caret $off $ml={2} /></ToolCell>
                  <ToolCell $w={30} $fs={15} $bold>Aa<Caret $off $ml={2} /></ToolCell>
                </ToolBox>
                <ToolBox>
                  <ToolCell $w={33} $first $fs={18} $bold>A<Caret $off $ml={5} /></ToolCell>
                </ToolBox>
              </ToolRow>
            </ToolCol>
          </GroupBody>
          <GroupLabel $launcher>Font<FrameArrow /></GroupLabel>
        </Group>

        <Group $w={292}>
          <GroupBody>
            <ToolCol $pl={3}>
              <ToolRow>
                <ToolBox>
                  <ToolCell $w={31} $first><BulletIcon /><Caret $off $ml={2} /></ToolCell>
                  <ToolCell $w={31}><BulletIcon num /><Caret $off $ml={2} /></ToolCell>
                </ToolBox>
                <ToolBox>
                  <ToolCell $w={21} $first><IndentIcon /></ToolCell>
                  <ToolCell $w={21}><IndentIcon inc /></ToolCell>
                </ToolBox>
                <ToolBox>
                  <ToolCell $w={31} $first><SpacingIcon /></ToolCell>
                </ToolBox>
              </ToolRow>
              <ToolRow $gap={3}>
                <ToolBox>
                  <ToolCell $w={22} $first><AlignIcon kind="l" /></ToolCell>
                  <ToolCell $w={24}><AlignIcon kind="c" /></ToolCell>
                  <ToolCell $w={24}><AlignIcon kind="r" /></ToolCell>
                  <ToolCell $w={21}><AlignIcon kind="j" /></ToolCell>
                </ToolBox>
                <ToolBox>
                  <ToolCell $w={30} $first><ColumnsIcon /><Caret $off $ml={2} /></ToolCell>
                </ToolBox>
              </ToolRow>
            </ToolCol>
            <SmallCol $ml={2}>
              <SmallBtn $off $gap={4}><TextDirIcon />Text Direction<Caret $off /></SmallBtn>
              <SmallBtn $off $gap={4}><AlignTextIcon />Align Text<Caret $off /></SmallBtn>
              <SmallBtn $off><SmartArtIcon />Convert to SmartArt<Caret $off /></SmallBtn>
            </SmallCol>
          </GroupBody>
          <GroupLabel $launcher>Paragraph<FrameArrow /></GroupLabel>
        </Group>

        <Group $w={346} $ml={-1}>
          <GroupBody>
            <Gallery>
              <ShapeGrid>
                {shapes.map((shape, i) => (
                  <S key={i}>{shape}</S>
                ))}
              </ShapeGrid>
              <GalleryBtns>
                <GalleryBtn $first><UpArrow fill="#a5b3c6" /></GalleryBtn>
                <GalleryBtn><DownArrow fill="#a5b3c6" /></GalleryBtn>
                <GalleryBtn><DownArrow fill="#a5b3c6" /></GalleryBtn>
              </GalleryBtns>
            </Gallery>
            <LargeBtn $w={44} $ml={4}>
              <ArrangeLg />
              Arrange
              <Caret $ml={0} $mt={5} />
            </LargeBtn>
            <LargeBtn $w={40} $ml={1} $off>
              <QuickStylesLg />
              Quick
              <span>Styles<Caret $off $ml={1} /></span>
            </LargeBtn>
            <SmallCol $ml={6}>
              <SmallBtn $off $gap={3}><FillIcon />Shape Fill<Caret $off /></SmallBtn>
              <SmallBtn $off $gap={3}><OutlineIcon />Shape Outline<Caret $off /></SmallBtn>
              <SmallBtn $off $gap={3}><EffectsIcon />Shape Effects<Caret $off /></SmallBtn>
            </SmallCol>
          </GroupBody>
          <GroupLabel $launcher>Drawing<FrameArrow /></GroupLabel>
        </Group>

        <Group $w={82}>
          <GroupBody>
            <SmallCol $ml={5}>
              <SmallBtn $gap={3}><Binoculars />Find</SmallBtn>
              <SmallBtn $gap={1}><ReplaceIcon />Replace<Caret $ml={3} /></SmallBtn>
              <SmallBtn $gap={3}><CursorIcon />Select<Caret $ml={3} /></SmallBtn>
            </SmallCol>
          </GroupBody>
          <GroupLabel>Editing</GroupLabel>
        </Group>
      </Ribbon>

      <Workspace>
        <SidePane>
          <PaneTabs>
            <PaneTab $active $w={63} $pl={8}>
              <TabShape width="63" height="20">
                <defs>
                  <linearGradient id="tabOn" x1="0" x2="0" y1="0" y2="1">
                    <stop offset="0" stopColor="#f2f6fd" />
                    <stop offset="0.5" stopColor="#d4e3f7" />
                    <stop offset="1" stopColor="#a6c3ec" />
                  </linearGradient>
                </defs>
                <path d="M0 2Q0 .5 2 .5H46Q49 .5 51 3L62 19.500H0z" fill="url(#tabOn)" stroke="#7ba1d4" />
              </TabShape>
              <span>Slides</span>
            </PaneTab>
            <PaneTab $w={64} $pl={8} $ml={-5}>
              <TabShape width="64" height="20">
                <defs>
                  <linearGradient id="tabOff" x1="0" x2="0" y1="0" y2="1">
                    <stop offset="0" stopColor="#c9dcf6" />
                    <stop offset="1" stopColor="#a0bfe9" />
                  </linearGradient>
                </defs>
                <path d="M0 19.500Q3 18 3 10V4Q3 .5 7 .5H47Q50 .5 52 3L63 19.500z" fill="url(#tabOff)" stroke="#6f97cf" />
              </TabShape>
              <span>Outline</span>
            </PaneTab>
            <PaneClose>x</PaneClose>
          </PaneTabs>
          <ThumbList>
            {[1, 2, 3].map((n) => (
              <ThumbRow key={n}>
                <ThumbNo>{n}</ThumbNo>
                <Thumb />
              </ThumbRow>
            ))}
          </ThumbList>
        </SidePane>
        <Splitter />
        <MainCol>
          <EditRow>
            <Stage>
              <Slide>
                <TitleBox $h={105}>Click to add title</TitleBox>
                <BodyBox $h={412}>
                  <Bullet><span>•</span><span>Click to add text</span></Bullet>
                  <ContentIcons>
                    <TableIcon />
                    <ChartIcon />
                    <SmartIcon />
                    <PictureIcon />
                    <ClipIcon />
                    <MediaIcon />
                  </ContentIcons>
                </BodyBox>
              </Slide>
            </Stage>
            <VScroll>
              <ScrollArrow><UpArrow /></ScrollArrow>
              <Track>
                <Thumbbar><Grip /></Thumbbar>
              </Track>
              <ScrollArrow><DownArrow /></ScrollArrow>
              <NavBtns>
                <DoubleArrow up />
                <DoubleArrow />
              </NavBtns>
            </VScroll>
          </EditRow>
          <HSplit />
          <NotesRow>
            <Notes>Click to add notes</Notes>
            <NotesScroll>
              <UpArrow fill="#8ea6c8" />
              <DownArrow fill="#8ea6c8" />
            </NotesScroll>
          </NotesRow>
        </MainCol>
        <Menu>
          <MenuItem $off><Scissors /><span>Cu<u>t</u></span></MenuItem>
          <MenuItem $off><CopyIcon /><span><u>C</u>opy</span></MenuItem>
          <MenuItem><PasteSm /><span><u>P</u>aste</span></MenuItem>
          <MenuSep />
          <MenuItem><NewSlideSm /><span><u>N</u>ew Slide</span></MenuItem>
        </Menu>
      </Workspace>

      <StatusBar>
        <StatusCell $w={73}>Slide 3 of 3</StatusCell>
        <StatusCell $w={94}>"Office Theme"</StatusCell>
        <StatusCell $w={33}><CheckBook /></StatusCell>
        <StatusRight>
          <ViewBox>
            <NormalView />
            <SorterView />
            <ShowView />
          </ViewBox>
          <Zoom>86%</Zoom>
          <ZoomBtn />
          <ZoomTrack>
            <Tick />
            <ZoomThumb width="9" height="14">
              <path d="M.5.5h8v8L4.500 13 .5 8.500z" fill="#e7eef8" stroke="#5f7ba3" />
              <path d="M4.500 4v4" stroke="#5f7ba3" />
            </ZoomThumb>
          </ZoomTrack>
          <ZoomBtn plus />
          <svg width="17" height="15" style={{ marginLeft: 10, marginRight: 4 }}>
            <rect x=".5" y=".5" width="15" height="14" fill="#e8f0fa" stroke="#8ba6cc" />
            <path d="M3 3 6 6M13 3l-3 3M3 12l3-3M13 12l-3-3" stroke="#33476a" strokeDasharray="1 1" />
          </svg>
        </StatusRight>
      </StatusBar>
    </Window>
  );
}
